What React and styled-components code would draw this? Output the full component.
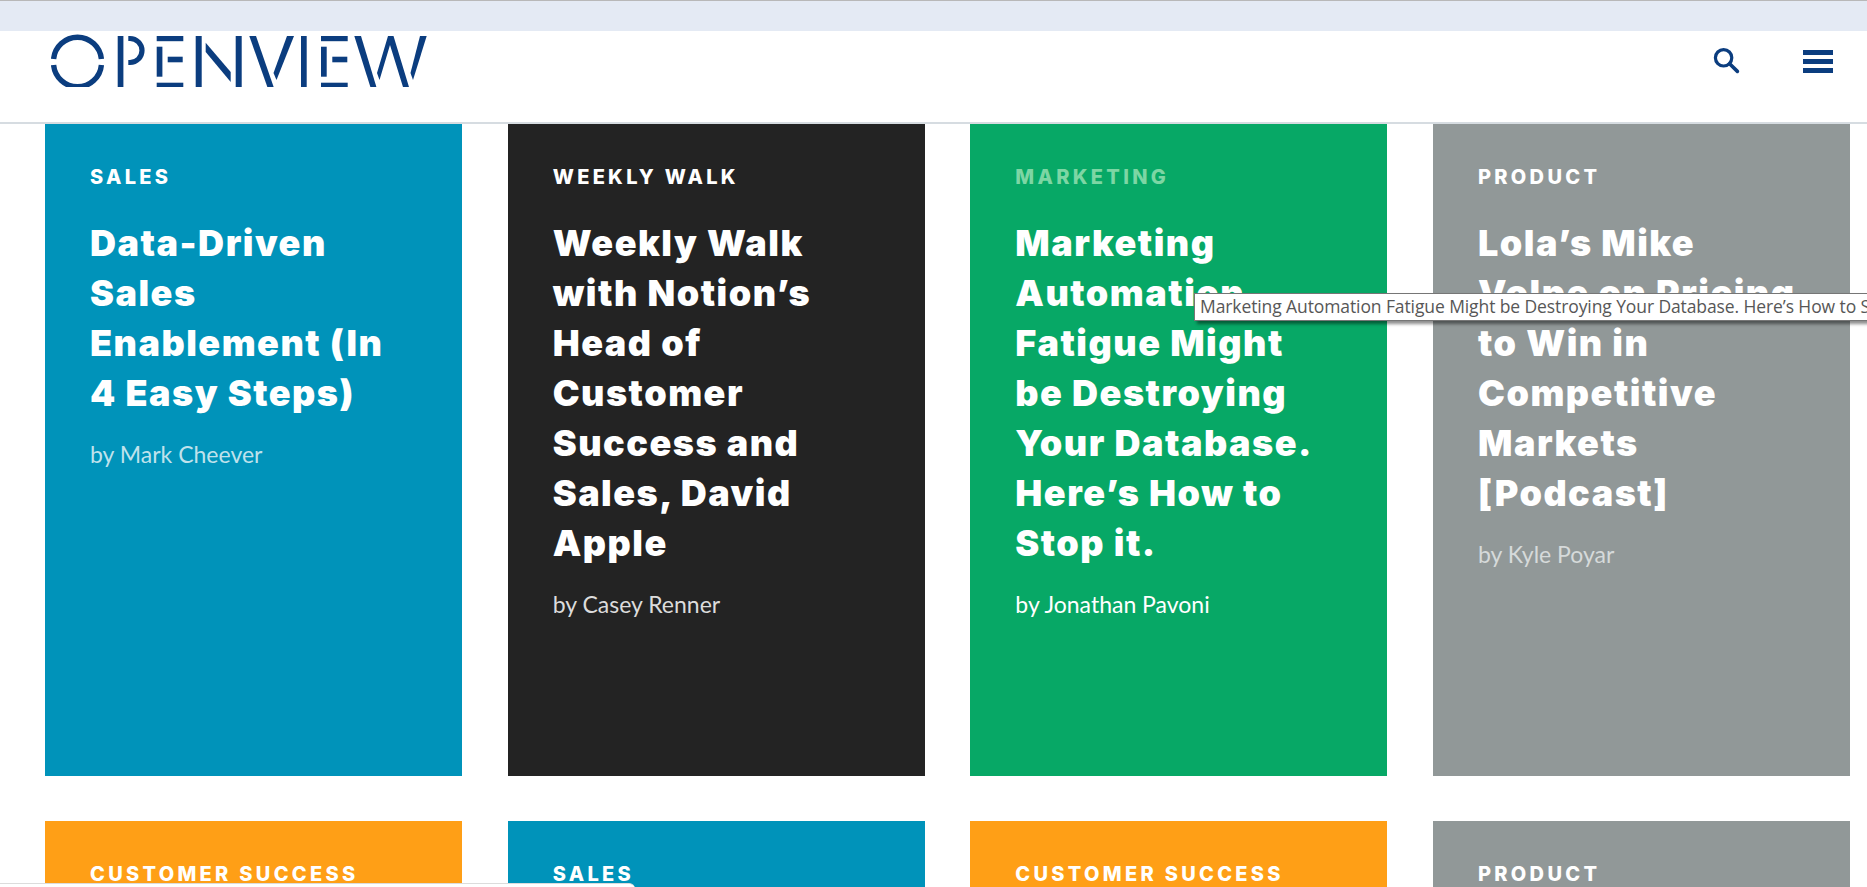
import React from "react";
import styled, { createGlobalStyle } from "styled-components";

const Global = createGlobalStyle`
  html, body { margin: 0; padding: 0; height: 887px; overflow: hidden; background: #fff; }
  body { font-family: "Inter", "Lato", sans-serif; }
`;

const Page = styled.div`
  position: relative;
  width: 1867px;
  height: 887px;
  overflow: hidden;
  background: #fff;
`;

const TopStrip = styled.div`
  height: 30px;
  background: #e4eaf4;
  border-top: 1px solid #b8b8b8;
`;

const Header = styled.header`
  height: 93px;
  box-sizing: border-box;
  border-bottom: 2px solid #d6dce1;
  display: flex;
  justify-content: space-between;
  align-items: flex-start;
  background: #fff;
  padding-right: 34px;
`;

const Logo = styled.svg`
  display: block;
  margin-left: 51px;
  margin-top: 2px;
  width: 376px;
  height: 54px;
`;

const Tools = styled.div`
  display: flex;
  align-items: flex-start;
  gap: 63px;
  padding-top: 16px;
`;

const SearchIcon = styled.svg`
  display: block;
  width: 27px;
  height: 27px;
`;

const Burger = styled.div`
  width: 30px;
  margin-top: 3px;
  display: flex;
  flex-direction: column;
  gap: 4px;
`;

const BurgerBar = styled.span`
  display: block;
  height: 5px;
  background: #0b3d7f;
`;

const Grid = styled.main`
  display: grid;
  grid-template-columns: repeat(4, 1fr);
  column-gap: 45.67px;
  row-gap: 45px;
  padding: 0 17px 0 45px;
`;

const Card = styled.article`
  height: 652px;
  box-sizing: border-box;
  padding: 40px 45px 0;
  background: ${(p) => p.$bg};
  color: #fff;
`;

const Label = styled.div`
  font-weight: 800;
  font-size: 20px;
  line-height: 26px;
  letter-spacing: 3.3px;
  white-space: nowrap;
  color: ${(p) => p.$color || "#fff"};
`;

const Title = styled.h2`
  margin: 28px 0 0;
  font-weight: 900;
  font-size: 36px;
  line-height: 50px;
  letter-spacing: 1.5px;
`;

const TitleLine = styled.span`
  display: block;
  white-space: nowrap;
`;

const Author = styled.div`
  margin-top: 21px;
  font-family: "Lato", sans-serif;
  font-weight: 400;
  font-size: 23px;
  line-height: 30px;
  color: ${(p) => p.$color};
`;

const Tooltip = styled.div`
  position: absolute;
  left: 1194px;
  top: 293px;
  width: 700px;
  height: 28px;
  box-sizing: border-box;
  padding-left: 5px;
  background: #fff;
  border: 1px solid #767676;
  box-shadow: 3px 3px 3px rgba(0, 0, 0, 0.45);
  font-family: "Open Sans", sans-serif;
  font-size: 17.5px;
  line-height: 25px;
  letter-spacing: -0.1px;
  color: #575757;
  white-space: nowrap;
`;

const BottomEdge = styled.div`
  position: absolute;
  left: 0;
  top: 883px;
  width: 635px;
  height: 6px;
  background: #fff;
  border-top: 1px solid #dcdcdc;
  border-top-right-radius: 6px;
`;

const NAVY = "#0b3d7f";

const cards = [
  { bg: "#0093ba", label: "SALES", title: ["Data-Driven", "Sales", "Enablement (In", "4 Easy Steps)"], author: "by Mark Cheever", authorColor: "#bfe2ec" },
  { bg: "#232323", label: "WEEKLY WALK", title: ["Weekly Walk", "with Notion’s", "Head of", "Customer", "Success and", "Sales, David", "Apple"], author: "by Casey Renner", authorColor: "#dcdcdc" },
  { bg: "#07a866", label: "MARKETING", labelColor: "#7dd6a4", title: ["Marketing", "Automation", "Fatigue Might", "be Destroying", "Your Database.", "Here’s How to", "Stop it."], author: "by Jonathan Pavoni", authorColor: "#ffffff" },
  { bg: "#919898", label: "PRODUCT", title: ["Lola’s Mike", "Volpe on Pricing", "to Win in", "Competitive", "Markets", "[Podcast]"], author: "by Kyle Poyar", authorColor: "#d6dada" },
  { bg: "#ff9f16", label: "CUSTOMER SUCCESS" },
  { bg: "#0093ba", label: "SALES" },
  { bg: "#ff9f16", label: "CUSTOMER SUCCESS" },
  { bg: "#919898", label: "PRODUCT" },
];

function OpenViewLogo() {
  return (
    <Logo viewBox="51 31 376 54" fill={NAVY} aria-label="OpenView">
      <path d="M53.6 57 A24 24 0 0 1 101.4 57" fill="none" stroke={NAVY} strokeWidth="5.4" />
      <path d="M53.6 63 A24 24 0 0 0 101.4 63" fill="none" stroke={NAVY} strokeWidth="5.4" />
      <rect x="117.7" y="34" width="5.7" height="52" />
      <path d="M128.3 36.5H130a12 12 0 0 1 0 24h-1.7" fill="none" stroke={NAVY} strokeWidth="5.2" />
      <rect x="156.7" y="34" width="26.6" height="5.2" />
      <rect x="156.7" y="44.7" width="5.7" height="30" />
      <rect x="167.7" y="54.7" width="15" height="5.6" />
      <rect x="156.7" y="80.7" width="26.6" height="5.3" />
      <rect x="195.7" y="34" width="6" height="52" />
      <polygon points="205.7,40.7 230.7,70 230.7,80 205.7,50" />
      <rect x="235.7" y="34" width="6" height="52" />
      <polygon points="249.3,34 256,34 274,86 267.7,86" />
      <polygon points="287,34 294,34 276.5,78 273.5,71" />
      <rect x="301" y="34" width="5.7" height="52" />
      <rect x="321" y="34" width="26.7" height="5.2" />
      <rect x="321" y="44.7" width="5.7" height="30" />
      <rect x="332.3" y="54.7" width="15" height="5.6" />
      <rect x="321" y="80.7" width="26.7" height="5.3" />
      <polygon points="354.3,34 361,34 376.7,86 370.7,86" />
      <polygon points="388,34 393.5,34 409.3,86 403.3,86 390,43 379.5,78 377,71" />
      <polygon points="420,34 426.7,34 413,78 410.5,71" />
    </Logo>
  );
}

export default function App() {
  return (
    <Page>
      <Global />
      <TopStrip />
      <Header>
        <OpenViewLogo />
        <Tools>
          <SearchIcon viewBox="0 0 27 27" fill="none" stroke={NAVY}>
            <circle cx="10.6" cy="10.8" r="8.2" strokeWidth="3.2" />
            <path d="M16.6 16.8 L24.4 24.4" strokeWidth="3.6" strokeLinecap="round" />
          </SearchIcon>
          <Burger>
            <BurgerBar />
            <BurgerBar />
            <BurgerBar />
          </Burger>
        </Tools>
      </Header>
      <Grid>
        {cards.map((c, i) => (
          <Card key={i} $bg={c.bg}>
            <Label $color={c.labelColor}>{c.label}</Label>
            {c.title && (
              <Title>
                {c.title.map((t) => (
                  <TitleLine key={t}>{t}</TitleLine>
                ))}
              </Title>
            )}
            {c.author && <Author $color={c.authorColor}>{c.author}</Author>}
          </Card>
        ))}
      </Grid>
      <Tooltip>Marketing Automation Fatigue Might be Destroying Your Database. Here’s How to Stop it.</Tooltip>
      <BottomEdge />
    </Page>
  );
}
